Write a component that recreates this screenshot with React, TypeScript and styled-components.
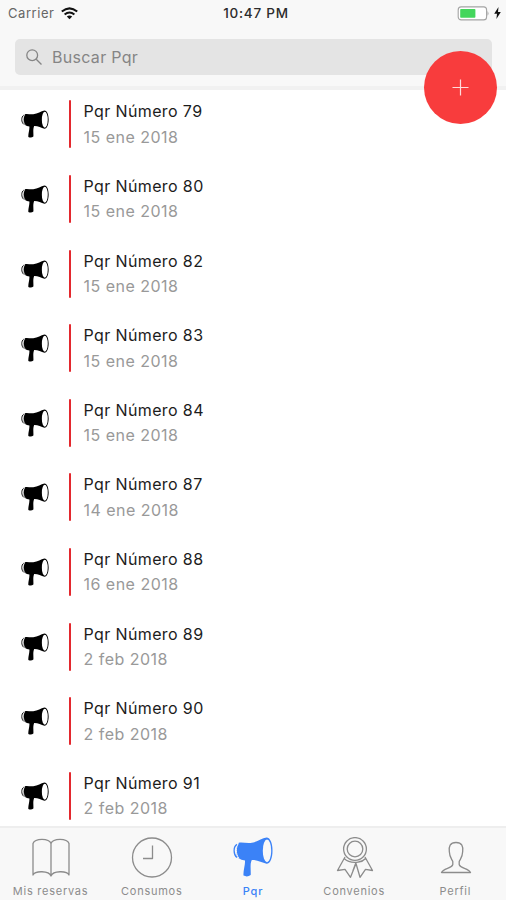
import React from 'react';
import styled, { createGlobalStyle } from 'styled-components';

const GlobalStyle = createGlobalStyle`
  * { box-sizing: border-box; }
  body { margin: 0; background: #fff; font-family: Inter, "Liberation Sans", sans-serif; }
`;

const Screen = styled.main`
  position: relative;
  width: 506px;
  height: 900px;
  display: flex;
  flex-direction: column;
  overflow: hidden;
  background: #fff;
`;

const Header = styled.header`
  flex: none;
  height: 90px;
  background: #f8f8f8;
  border-bottom: 4px solid #f1f1f1;
`;

const StatusBar = styled.div`
  height: 39px;
  padding: 0 5px 13px 8px;
  display: grid;
  grid-template-columns: 1fr auto 1fr;
  align-items: center;
  font-size: 13px;
  color: #666;
`;

const StatusGroup = styled.div<{ $end?: boolean }>`
  display: flex;
  align-items: center;
  gap: ${(p) => (p.$end ? 5 : 7)}px;
  justify-content: ${(p) => (p.$end ? 'flex-end' : 'flex-start')};
`;

const Carrier = styled.span`
  letter-spacing: 0.55px;
`;

const Time = styled.time`
  padding-left: 3px;
  font-size: 13.5px;
  font-weight: 500;
  letter-spacing: 0.75px;
  color: #2c2c2c;
`;

const SearchField = styled.div`
  height: 36px;
  margin: 0 14px 0 15px;
  padding: 0 11px;
  display: flex;
  align-items: center;
  gap: 10px;
  border-radius: 5px;
  background: #e4e4e4;
  color: #858585;
  font-size: 16px;
  letter-spacing: 0.3px;
`;

const List = styled.ul`
  flex: 1;
  min-height: 0;
  margin: 0;
  padding: 0;
  overflow: hidden;
  list-style: none;
`;

const Row = styled.li`
  height: 74.6px;
  padding: 10.4px 0 0 20.5px;
  display: flex;
  align-items: flex-start;
`;

const RowIcon = styled.div`
  width: 48px;
  height: 48px;
  padding-top: 10px;
  color: #000;
`;

const Marker = styled.div`
  width: 2.5px;
  height: 48px;
  border-radius: 1px;
  background: #e3282e;
`;

const RowText = styled.div`
  padding-left: 12.5px;
  display: flex;
  flex-direction: column;
  font-size: 16px;
  line-height: 25.5px;
`;

const Title = styled.span`
  margin-top: -1px;
  letter-spacing: 0.38px;
  color: #1c1c1c;
`;

const DateText = styled.span`
  letter-spacing: 0.48px;
  color: #999;
`;

const AddButton = styled.button`
  position: absolute;
  top: 51px;
  right: 9px;
  width: 73px;
  height: 73px;
  padding: 0;
  border: 0;
  border-radius: 50%;
  display: grid;
  place-items: center;
  background: #f83c3d;
`;

const TabBar = styled.nav`
  flex: none;
  height: 74px;
  display: grid;
  grid-template-columns: repeat(5, 1fr);
  border-top: 2px solid #eeeeee;
  background: #f8f8f8;
`;

const Tab = styled.div<{ $active?: boolean }>`
  display: flex;
  flex-direction: column;
  align-items: center;
  color: ${(p) => (p.$active ? '#3b82f7' : '#8c8c8c')};
`;

const TabIcon = styled.div`
  height: 55px;
  padding: 9px 0 0 1px;
`;

const TabLabel = styled.span<{ $active?: boolean }>`
  font-size: 11px;
  line-height: 17px;
  font-weight: ${(p) => (p.$active ? 500 : 400)};
  letter-spacing: 0.75px;
  white-space: nowrap;
`;

function Megaphone({ size, lens }: { size: number; lens: string }) {
  return (
    <svg width={size} height={size} viewBox="0 0 40 40" display="block" fill="currentColor">
      <path d="M5.8 5.8C9 5 13 6.4 17.5 6C24 5.3 28.5 1.5 33.5 .6C41.5 .6 41.5 26.6 33.5 26.8C29 25.6 24 22.8 18.8 23L18.2 24.5C17 28 18 34 17.7 38Q14.5 40.5 10.5 38.6C10 34 12.4 28 12 23.4Q8.4 23.2 5.2 21C2.3 17 2.6 10.5 5.8 5.8Z" />
      <ellipse cx="34" cy="13.8" rx="4.2" ry="11.4" fill={lens} />
      <path d="M5.4 6.6C2.6 10 2.6 17 5.8 21.2" fill="none" stroke={lens} strokeWidth="1" />
      <path d="M3.9 7.4C.1 9.8.3 17.4 3.9 20.5" fill="none" stroke="currentColor" strokeWidth="1.3" />
    </svg>
  );
}

function Line({ children }: { children: React.ReactNode }) {
  return (
    <svg width="42" height="42" viewBox="0 0 42 42" display="block" fill="none" stroke="currentColor" strokeWidth="1.3" strokeLinejoin="round">
      {children}
    </svg>
  );
}

const BookIcon = () => (
  <Line>
    <path d="M21 6.5C19 1 5 1 3 6.5V38C5 33.5 19 33.5 21 39C23 33.5 37 33.5 39 38V6.5C37 1 23 1 21 6.5ZM21 6.5V39" />
  </Line>
);

const ClockIcon = () => (
  <Line>
    <circle cx="21" cy="20.5" r="19.5" />
    <path d="M21.5 8.5V21.5H12" />
  </Line>
);

const RibbonIcon = () => (
  <Line>
    <circle cx="21" cy="12" r="11.4" />
    <circle cx="21" cy="12" r="7.8" />
    <path d="M11 20L3.5 33.5L11 32.3L16.5 40.3L22 26.5L26 40.3L31.5 32.3L38.5 33.5L31 20M10.2 21.5Q15 26.3 24 25.2Q29 24.5 31.6 21.5M22 25.5L18.8 34" />
  </Line>
);

const PersonIcon = () => (
  <Line>
    <path d="M21 5.5C14.8 5.5 13.8 9.5 14.3 14.5C14.5 20 16.3 21.5 17.8 24.5V27.5C17 31.5 8 31 6.5 35.5H35.5C34 31 25 31.5 24.2 27.5V24.5C25.7 21.5 27.5 20 27.7 14.5C28.2 9.5 27.2 5.5 21 5.5Z" />
  </Line>
);

const records = [
  ['79', '15 ene 2018'],
  ['80', '15 ene 2018'],
  ['82', '15 ene 2018'],
  ['83', '15 ene 2018'],
  ['84', '15 ene 2018'],
  ['87', '14 ene 2018'],
  ['88', '16 ene 2018'],
  ['89', '2 feb 2018'],
  ['90', '2 feb 2018'],
  ['91', '2 feb 2018'],
];

const tabs = [
  { label: 'Mis reservas', icon: <BookIcon /> },
  { label: 'Consumos', icon: <ClockIcon /> },
  { label: 'Pqr', icon: <Megaphone size={40} lens="#f8f8f8" />, active: true },
  { label: 'Convenios', icon: <RibbonIcon /> },
  { label: 'Perfil', icon: <PersonIcon /> },
];

export default function App() {
  return (
    <Screen>
      <GlobalStyle />
      <Header>
        <StatusBar>
          <StatusGroup>
            <Carrier>Carrier</Carrier>
            <svg width="17" height="13" viewBox="0 0 17 13" fill="none" stroke="#111" strokeWidth="2">
              <path d="M.8 4.6Q8.5-1.9 16.2 4.6M3.6 7.6Q8.5 3.4 13.4 7.6" />
              <path d="M5.8 9.4Q8.5 7.4 11.2 9.4L8.5 12.2Z" fill="#111" stroke="none" />
            </svg>
          </StatusGroup>
          <Time>10:47 PM</Time>
          <StatusGroup $end>
            <svg width="32" height="15" viewBox="0 0 32 15">
              <rect x="1.2" y=".9" width="28.4" height="13" rx="3" fill="#fff" stroke="#a4a4a4" strokeWidth="1.1" />
              <rect x="3.2" y="3" width="15.2" height="8.8" rx=".8" fill="#43d65c" />
              <path d="M30.5 5Q32.5 7.4 30.5 9.8Z" fill="#a4a4a4" />
            </svg>
            <svg width="7" height="12" viewBox="0 0 7 12">
              <path d="M4.5 0L.2 6.8H3L2.4 12L6.8 5H4Z" fill="#111" />
            </svg>
          </StatusGroup>
        </StatusBar>
        <SearchField>
          <svg width="16" height="16" viewBox="0 0 16 16" fill="none" stroke="currentColor" strokeWidth="1.3">
            <circle cx="6.2" cy="6.2" r="5.4" />
            <path d="M10.2 10.2L15.5 15.5" />
          </svg>
          <span>Buscar Pqr</span>
        </SearchField>
      </Header>
      <List>
        {records.map(([number, date]) => (
          <Row key={number}>
            <RowIcon>
              <Megaphone size={28} lens="#fff" />
            </RowIcon>
            <Marker />
            <RowText>
              <Title>Pqr Número {number}</Title>
              <DateText>{date}</DateText>
            </RowText>
          </Row>
        ))}
      </List>
      <TabBar>
        {tabs.map((tab) => (
          <Tab key={tab.label} $active={tab.active}>
            <TabIcon>{tab.icon}</TabIcon>
            <TabLabel $active={tab.active}>{tab.label}</TabLabel>
          </Tab>
        ))}
      </TabBar>
      <AddButton aria-label="Agregar">
        <svg width="17" height="17" viewBox="0 0 17 17" stroke="#ffdcdc" strokeWidth="1.2">
          <path d="M8.5 .5V16.5M.5 8.5H16.5" />
        </svg>
      </AddButton>
    </Screen>
  );
}
